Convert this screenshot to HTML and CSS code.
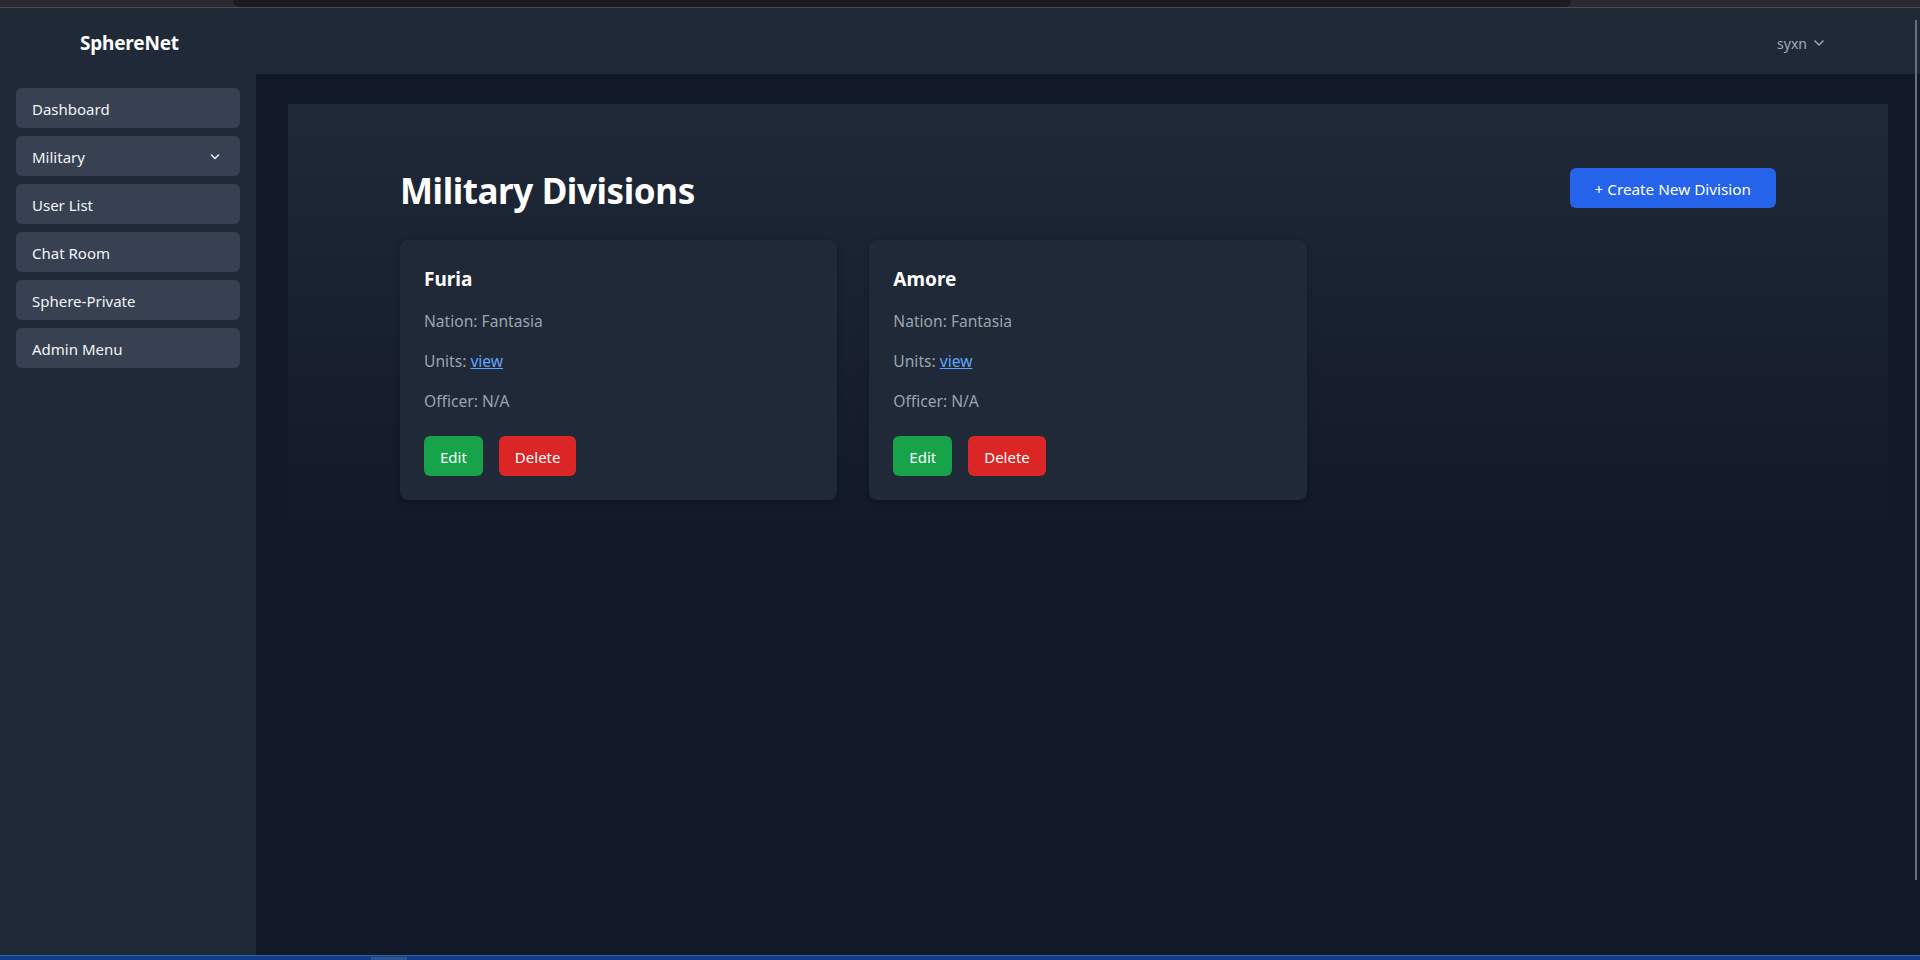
FILE: index.html
```html
<!DOCTYPE html>
<html lang="en">
<head>
<meta charset="utf-8">
<title>SphereNet - Military Divisions</title>
<link rel="stylesheet" href="styles.css">
</head>
<body>
<div class="app">
  <div class="chrome-strip"><div class="chrome-tab"></div></div>
  <header class="topbar">
    <div class="brand">SphereNet</div>
    <div class="user">
      <span>syxn</span>
      <svg class="chev-sm" width="10" height="6" viewBox="0 0 10 6"><path d="M1 1 L5 5 L9 1" fill="none" stroke="currentColor" stroke-width="1.6" stroke-linecap="round" stroke-linejoin="round"/></svg>
    </div>
  </header>
  <div class="layout">
    <nav class="sidebar">
      <a class="nav-item">Dashboard</a>
      <a class="nav-item nav-drop"><span>Military</span>
        <svg class="chev" width="10" height="6" viewBox="0 0 10 6"><path d="M1.5 1 L5 4.5 L8.5 1" fill="none" stroke="currentColor" stroke-width="1.6" stroke-linecap="round" stroke-linejoin="round"/></svg>
      </a>
      <a class="nav-item">User List</a>
      <a class="nav-item">Chat Room</a>
      <a class="nav-item">Sphere-Private</a>
      <a class="nav-item">Admin Menu</a>
    </nav>
    <main class="main">
      <section class="panel">
        <div class="page-head">
          <h1 class="title">Military Divisions</h1>
          <button class="btn btn-blue">+ Create New Division</button>
        </div>
        <div class="grid">
          <article class="card">
            <h3 class="card-title">Furia</h3>
            <p class="meta">Nation: Fantasia</p>
            <p class="meta">Units: <a class="link">view</a></p>
            <p class="meta">Officer: N/A</p>
            <div class="actions">
              <button class="btn btn-green">Edit</button>
              <button class="btn btn-red">Delete</button>
            </div>
          </article>
          <article class="card">
            <h3 class="card-title">Amore</h3>
            <p class="meta">Nation: Fantasia</p>
            <p class="meta">Units: <a class="link">view</a></p>
            <p class="meta">Officer: N/A</p>
            <div class="actions">
              <button class="btn btn-green">Edit</button>
              <button class="btn btn-red">Delete</button>
            </div>
          </article>
        </div>
      </section>
    </main>
  </div>
  <div class="taskbar"><div class="task-item"></div></div>
  <div class="scroll-thumb"></div>
</div>
</body>
</html>
```
FILE: styles.css
```css
* { box-sizing: border-box; }
html, body { margin: 0; padding: 0; }
body {
  width: 1920px;
  height: 960px;
  overflow: hidden;
  background: #111827;
  font-family: "Noto Sans", "Open Sans", sans-serif;
  color: #f3f4f6;
}
.app {
  position: relative;
  display: flex;
  flex-direction: column;
  height: 960px;
}
.chrome-strip {
  height: 8px;
  background: #2b2a33;
  border-bottom: 1px solid #4b4b53;
  padding-left: 233px;
  padding-right: 349px;
}
.chrome-tab {
  height: 7px;
  background: #1c1b22;
  border-bottom-left-radius: 6px;
  border-bottom-right-radius: 6px;
}
.topbar {
  height: 66px;
  background: #1f2937;
  display: flex;
  align-items: center;
  justify-content: space-between;
  padding: 4px 96px 0 80px;
}
.brand {
  font-weight: 700;
  font-size: 19px;
  color: #ffffff;
  letter-spacing: -0.2px;
}
.user {
  display: flex;
  align-items: center;
  gap: 7px;
  font-size: 14px;
  color: #a3aab6;
}
.chev-sm { color: #9ca3af; }
.layout {
  flex: 1;
  display: flex;
  min-height: 0;
}
.sidebar {
  width: 256px;
  background: #1f2937;
  padding: 14px 16px;
  display: flex;
  flex-direction: column;
  gap: 8px;
}
.nav-item {
  height: 40px;
  display: flex;
  align-items: center;
  justify-content: space-between;
  padding: 1px 20px 0 16px;
  background: #374151;
  border-radius: 6px;
  color: #f3f4f6;
  font-size: 15px;
}
.chev { color: #e5e7eb; }
.main {
  flex: 1;
  padding: 30px 32px 32px;
  background: #111827;
}
.panel {
  height: 100%;
  background: linear-gradient(to bottom, #1f2937 0%, #111827 55%);
  padding: 64px 112px;
}
.page-head {
  display: flex;
  align-items: flex-start;
  justify-content: space-between;
  margin-bottom: 29px;
}
.title {
  margin: 0;
  padding-top: 3px;
  font-size: 35px;
  line-height: 40px;
  font-weight: 700;
  color: #ffffff;
  letter-spacing: -0.4px;
}
.btn {
  height: 40px;
  border: 0;
  border-radius: 6px;
  padding: 1px 16px 0;
  font-family: inherit;
  font-size: 15px;
  color: #ffffff;
  cursor: pointer;
}
.btn-blue { background: #2563eb; padding: 1px 25px 0 24px; font-size: 15.3px; }
.btn-green { background: #16a34a; }
.btn-red { background: #dc2626; }
.grid {
  display: grid;
  grid-template-columns: repeat(3, 1fr);
  gap: 32px;
}
.card {
  background: #1f2937;
  border-radius: 8px;
  padding: 25px 24px 24px;
  box-shadow: 0 2px 6px rgba(0, 0, 0, 0.25);
}
.card-title {
  margin: 0 0 16px;
  font-size: 19px;
  line-height: 28px;
  font-weight: 700;
  color: #ffffff;
}
.meta {
  margin: 0 0 16px;
  font-size: 15.6px;
  line-height: 24px;
  color: #9ca3af;
}
.link {
  color: #60a5fa;
  text-decoration: underline;
}
.actions {
  display: flex;
  gap: 16px;
  margin-top: 23px;
}
.taskbar {
  height: 5px;
  background: #0f3e88;
  border-top: 1px solid #3d5f95;
  padding-left: 371px;
}
.task-item {
  width: 36px;
  height: 4px;
  margin-top: 1px;
  background: #2f5590;
}
.scroll-thumb {
  position: absolute;
  left: 1915px;
  top: 20px;
  width: 2px;
  height: 860px;
  background: #6b6f76;
}
```
